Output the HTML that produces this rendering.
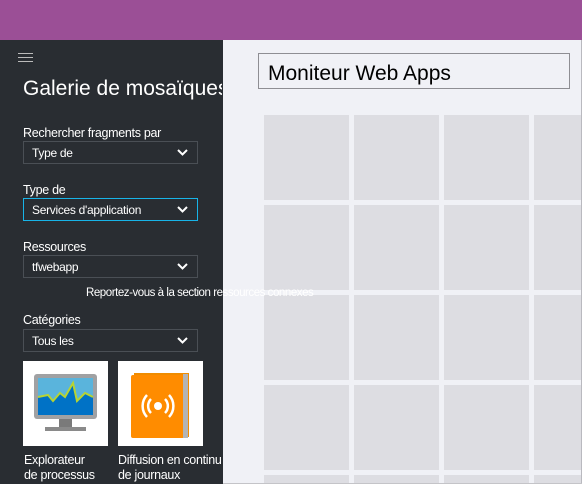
<!DOCTYPE html>
<html style="width:582px;height:484px;overflow:hidden"><head><style>
*{margin:0;padding:0;box-sizing:border-box}
body{width:582px;height:484px;overflow:hidden;position:relative;background:#f0f1f6;font-family:"Liberation Sans",sans-serif}
.top{position:absolute;left:0;top:0;width:582px;height:40px;background:#9b4f96}
.side{position:absolute;left:0;top:40px;width:223px;height:444px;background:#292d32}
.ham{position:absolute;left:18px;height:1px;width:15px;background:#bbb}
.title{position:absolute;left:23px;top:37px;font-size:21px;color:#fff;white-space:nowrap;width:199px;overflow:hidden}
.lbl{position:absolute;left:23px;font-size:12.5px;color:#fff;white-space:nowrap;letter-spacing:-0.3px}
.dd{position:absolute;left:23px;width:175px;height:23px;border:1px solid #4a4f55;color:#fff;font-size:12px;padding:4px 0 0 8px;letter-spacing:-0.3px}
.dd.act{border-color:#18b4e8}
.dd svg{position:absolute;right:9px;top:7px}
.tile{position:absolute;top:361px;width:85px;height:85px;background:#fff}
.cap{position:absolute;font-size:12.5px;color:#fff;line-height:15px;white-space:nowrap;letter-spacing:-0.3px;overflow:hidden;height:31px}
.inp{position:absolute;left:258px;top:53px;width:312px;height:36px;border:1px solid #8e8e93;font-size:21px;padding:8px 0 0 9px;color:#000}
.g{position:absolute;width:85px;height:85px;background:#dddde2}
.g.w{width:47px}
.g.s{height:8px}
</style></head><body>
<div class="top"></div>
<div class="inp">Moniteur Web Apps</div>
<div class="g" style="left:264px;top:115px"></div><div class="g" style="left:354px;top:115px"></div><div class="g" style="left:444px;top:115px"></div><div class="g w" style="left:534px;top:115px"></div>
<div class="g" style="left:264px;top:205px"></div><div class="g" style="left:354px;top:205px"></div><div class="g" style="left:444px;top:205px"></div><div class="g w" style="left:534px;top:205px"></div>
<div class="g" style="left:264px;top:295px"></div><div class="g" style="left:354px;top:295px"></div><div class="g" style="left:444px;top:295px"></div><div class="g w" style="left:534px;top:295px"></div>
<div class="g" style="left:264px;top:385px"></div><div class="g" style="left:354px;top:385px"></div><div class="g" style="left:444px;top:385px"></div><div class="g w" style="left:534px;top:385px"></div>
<div class="g s" style="left:264px;top:475px"></div><div class="g s" style="left:354px;top:475px"></div><div class="g s" style="left:444px;top:475px"></div><div class="g s w" style="left:534px;top:475px"></div>
<div style="position:absolute;left:581px;top:40px;width:1px;height:444px;background:#b9b9bf"></div>
<div style="position:absolute;left:223px;top:483px;width:359px;height:1px;background:#c4c4c8"></div>
<div class="side">
<div class="ham" style="top:13px"></div><div class="ham" style="top:17px"></div><div class="ham" style="top:21px"></div>
<div class="title">Galerie de mosaïques</div>
</div>
<div class="lbl" style="top:126px">Rechercher fragments par</div>
<div class="dd" style="top:141px">Type de<svg width="11" height="7"><path d="M1 1l4.5 4.5L10 1" stroke="#fff" stroke-width="2" fill="none"/></svg></div>
<div class="lbl" style="top:183px">Type de</div>
<div class="dd act" style="top:198px">Services d'application<svg width="11" height="7"><path d="M1 1l4.5 4.5L10 1" stroke="#fff" stroke-width="2" fill="none"/></svg></div>
<div class="lbl" style="top:240px">Ressources</div>
<div class="dd" style="top:255px">tfwebapp<svg width="11" height="7"><path d="M1 1l4.5 4.5L10 1" stroke="#fff" stroke-width="2" fill="none"/></svg></div>
<div class="lbl" style="top:287px;left:86px;font-size:11.5px;letter-spacing:-0.45px">Reportez-vous à la section ressources connexes</div>
<div class="lbl" style="top:313px">Catégories</div>
<div class="dd" style="top:329px">Tous les<svg width="11" height="7"><path d="M1 1l4.5 4.5L10 1" stroke="#fff" stroke-width="2" fill="none"/></svg></div>
<div class="tile" style="left:23px"><svg width="85" height="85">
<rect x="11" y="13" width="63" height="45" rx="3" fill="#a0a1a3"/>
<rect x="15" y="17" width="55" height="37" fill="#5ab4dc"/>
<path d="M15 36l10-2 5 6 7-8 5 4 8-14 4 18 8-8 8 4V54H15z" fill="#0072c6"/>
<path d="M15 36l10-2 5 6 7-8 5 4 8-14 4 18 8-8 8 4" stroke="#b8d432" stroke-width="2" fill="none"/>
<rect x="36" y="58" width="13" height="8" fill="#7a7a7a"/>
<rect x="22" y="66" width="41" height="4" fill="#8a8a8a"/>
</svg></div>
<div class="tile" style="left:118px"><svg width="85" height="85">
<rect x="16" y="12" width="55" height="64" fill="#f08c00"/>
<rect x="13" y="14" width="54" height="63" rx="2" fill="#ff8c00"/>
<rect x="65" y="13" width="5" height="64" fill="#b4b4b4"/>
<circle cx="40" cy="45" r="4" fill="#fff"/>
<path d="M33 38a10 10 0 0 0 0 14M47 38a10 10 0 0 1 0 14M29 34a16 16 0 0 0 0 22M51 34a16 16 0 0 1 0 22" stroke="#fff" stroke-width="2.5" fill="none"/>
</svg></div>
<div class="cap" style="left:24px;top:453px">Explorateur<br>de processus</div>
<div class="cap" style="left:118px;top:453px;width:105px">Diffusion en continu<br>de journaux</div>
</body></html>
